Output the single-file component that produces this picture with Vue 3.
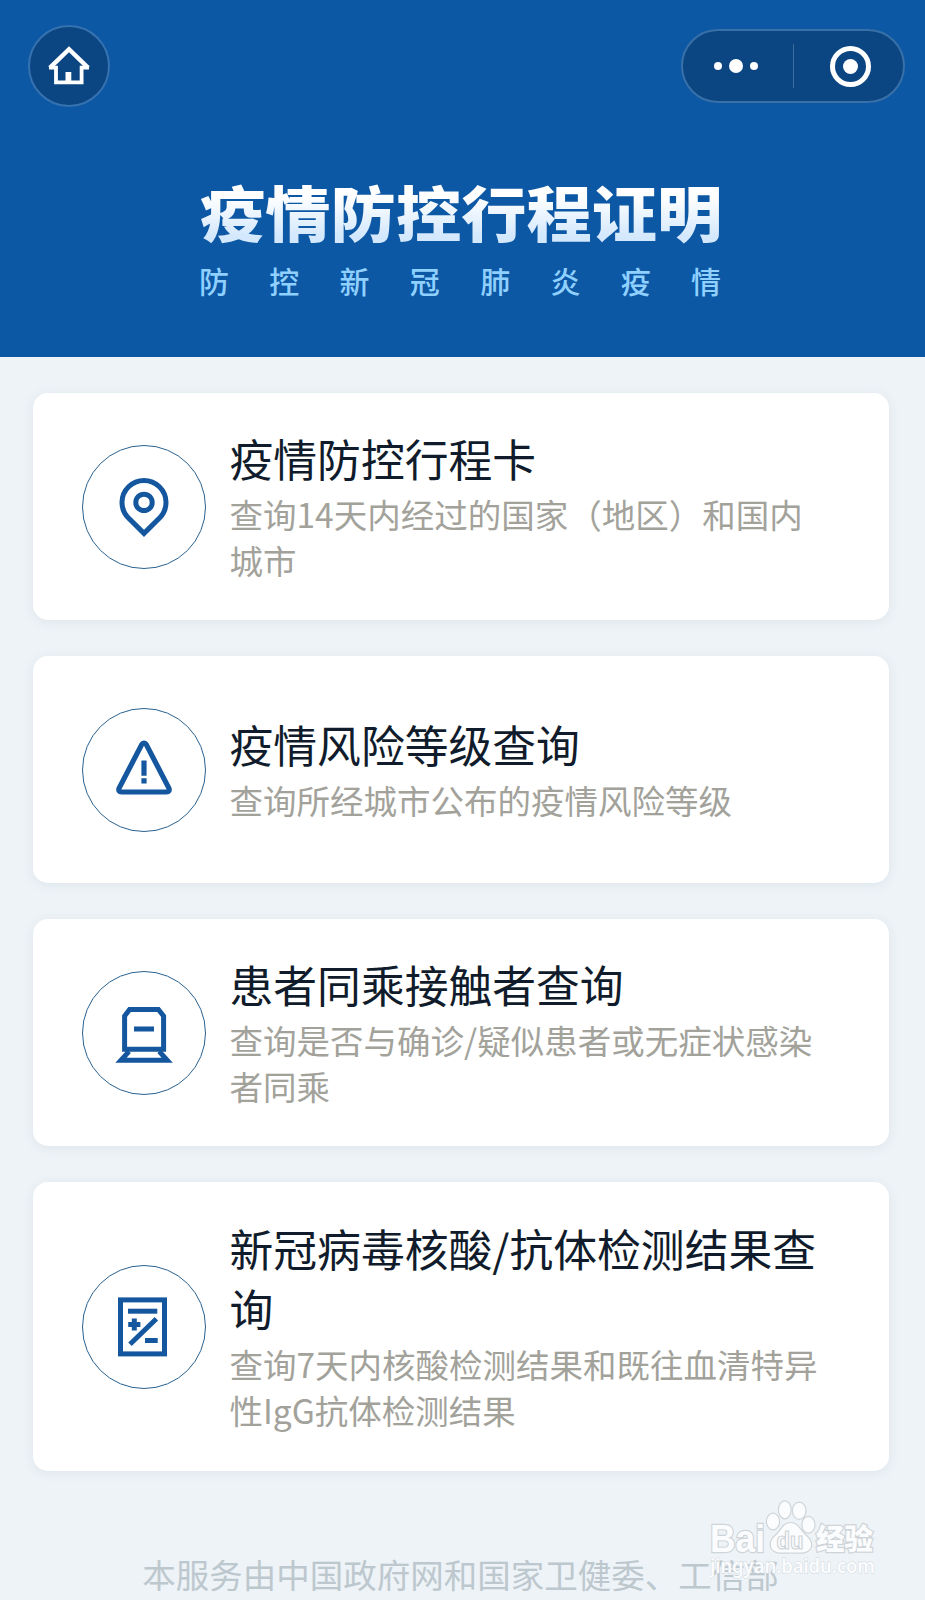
<template>
  <div class="page">
    <header class="hero">
      <div class="nav">
        <button class="home" aria-label="首页">
          <svg width="44" height="42" viewBox="0 0 44 42" fill="none" stroke="#fff">
            <path d="M2.8 22.8 L22 4.2 L41.2 22.8" stroke-width="4.4" />
            <path d="M2 22.7H9V37.3H34.6V22.7H42" stroke-width="3.8" />
            <path d="M21.4 37.3V27" stroke-width="5.8" />
          </svg>
        </button>
        <div class="capsule">
          <button class="capsule-btn more" aria-label="更多">
            <i class="dot"></i>
            <i class="dot big"></i>
            <i class="dot"></i>
          </button>
          <i class="divider"></i>
          <button class="capsule-btn" aria-label="关闭">
            <i class="ring"><i class="ring-core"></i></i>
          </button>
        </div>
      </div>
      <h1 class="hero-title">疫情防控行程证明</h1>
      <p class="hero-sub">
        <span v-for="char in subtitle" :key="char">{{ char }}</span>
      </p>
    </header>

    <main class="list">
      <section v-for="item in items" :key="item.icon" class="card" :class="item.icon">
        <div class="icon">
          <svg width="64" height="64" viewBox="0 0 64 64" fill="none" stroke="#14579f" stroke-width="5">
            <template v-if="item.icon === 'pin'">
              <path d="M32 58.4 L16 42.6 A22 22 0 1 1 48 42.6 Z" />
              <circle cx="32" cy="27.4" r="8.2" />
            </template>
            <template v-else-if="item.icon === 'risk'">
              <path d="M29.8 6.4 Q32 3.8 34.2 6.4 L57 50.4 Q58 53.8 54.4 54 H9.6 Q6 53.8 7 50.4 Z" stroke-width="5.2" stroke-linejoin="round" />
              <path d="M32 22.6V37.8M32 40.2V45.4" stroke-width="5.2" />
            </template>
            <template v-else-if="item.icon === 'train'">
              <path d="M17.6 8.4H46.4L51.6 15V48.2H12.6V15Z" />
              <path d="M22 28H42" />
              <path d="M17 50.4L9 59.2H55.2L47.2 50.4" />
            </template>
            <template v-else>
              <rect x="8.5" y="4.9" width="44" height="54" />
              <path d="M16 16.2H45.3" />
              <path d="M16.2 29.5H28.4M22.3 23.4V35.6" />
              <path d="M18 49.2L44.4 23.8" />
              <path d="M33 45.5H45.7" />
            </template>
          </svg>
        </div>
        <div class="content">
          <h2 class="title">{{ item.title }}</h2>
          <p class="desc">{{ item.desc }}</p>
        </div>
      </section>
    </main>

    <footer class="footer">本服务由中国政府网和国家卫健委、工信部</footer>

    <svg class="watermark" width="170" height="84" viewBox="0 0 170 84">
      <g class="mark">
        <ellipse cx="63" cy="25.5" rx="6.6" ry="8.4" />
        <ellipse cx="74.8" cy="13.8" rx="6.4" ry="9" />
        <ellipse cx="89.2" cy="14.8" rx="6.8" ry="8.6" />
        <ellipse cx="98.4" cy="28.8" rx="6.6" ry="8.4" />
        <path d="M80.5 26.5C88 26.5 90 33 95 38C101 43 103.5 48 100.5 53C97 58.5 89 57 80.5 57C72 57 65 58.5 61.5 53C58.5 48 61 42 66.5 38C71.5 33 73 26.5 80.5 26.5Z" />
        <text class="latin" x="0" y="56" textLength="55" lengthAdjust="spacingAndGlyphs">Bai</text>
        <text class="du" x="66.5" y="53" textLength="27" lengthAdjust="spacingAndGlyphs">du</text>
        <text class="cjk" x="106" y="54" textLength="57" lengthAdjust="spacingAndGlyphs">经验</text>
      </g>
      <text class="url" x="0" y="77" textLength="165" lengthAdjust="spacingAndGlyphs">jingyan.baidu.com</text>
    </svg>
  </div>
</template>

<script setup>
const subtitle = '防控新冠肺炎疫情'

const items = [
  {
    icon: 'pin',
    title: '疫情防控行程卡',
    desc: '查询14天内经过的国家（地区）和国内城市',
  },
  {
    icon: 'risk',
    title: '疫情风险等级查询',
    desc: '查询所经城市公布的疫情风险等级',
  },
  {
    icon: 'train',
    title: '患者同乘接触者查询',
    desc: '查询是否与确诊/疑似患者或无症状感染者同乘',
  },
  {
    icon: 'report',
    title: '新冠病毒核酸/抗体检测结果查询',
    desc: '查询7天内核酸检测结果和既往血清特异性IgG抗体检测结果',
  },
]
</script>

<style>
body {
  background: #edf3f7;
}
</style>

<style scoped>
.page {
  position: relative;
  box-sizing: border-box;
  height: 1600px;
  overflow: hidden;
  background: #edf3f7;
  font-family: 'Noto Sans CJK SC', sans-serif;
}

h1,
h2,
p {
  margin: 0;
}

button {
  padding: 0;
  border: 0;
  background: none;
}

.hero {
  box-sizing: border-box;
  height: 357px;
  padding-top: 25px;
  background: #0d58a4;
}

.nav {
  display: flex;
  align-items: center;
  justify-content: space-between;
  height: 82px;
  padding: 0 20px 0 28px;
}

.home {
  display: flex;
  align-items: center;
  justify-content: center;
  box-sizing: border-box;
  width: 82px;
  height: 82px;
  border: 2px solid #3672b0;
  border-radius: 50%;
  background: #0b4682;
}

.capsule {
  display: flex;
  align-items: center;
  box-sizing: border-box;
  width: 224px;
  height: 74px;
  border: 2px solid #3970a8;
  border-radius: 37px;
  background: #0b4682;
}

.capsule-btn {
  display: flex;
  flex: 1;
  align-items: center;
  justify-content: center;
}

.more {
  gap: 7px;
}

.dot {
  width: 8px;
  height: 8px;
  border-radius: 50%;
  background: #fff;
}

.dot:last-child {
  margin-right: 3px;
}

.dot.big {
  width: 14px;
  height: 14px;
}

.divider {
  width: 1px;
  height: 44px;
  background: #3d6c9d;
}

.ring {
  display: flex;
  align-items: center;
  justify-content: center;
  box-sizing: border-box;
  width: 41px;
  height: 41px;
  margin-left: 5px;
  border: 5.5px solid #fff;
  border-radius: 50%;
}

.ring-core {
  width: 15px;
  height: 15px;
  border-radius: 50%;
  background: #fff;
}

.hero-title {
  width: 524px;
  margin: 64px 0 0 200px;
  background: linear-gradient(#fff 30%, #d3e8fd 85%);
  background-clip: text;
  color: transparent;
  font-size: 65.3px;
  font-weight: 900;
  line-height: 80px;
  white-space: nowrap;
  transform: scaleY(0.93);
}

.hero-sub {
  display: flex;
  justify-content: space-between;
  width: 522px;
  margin: 9px 0 0 199px;
  color: #8fd0ff;
  font-size: 30px;
  font-weight: 500;
  line-height: 40px;
}

.list {
  display: flex;
  flex-direction: column;
  gap: 36px;
  padding: 36px 36px 0 33px;
}

.card {
  display: flex;
  align-items: center;
  box-sizing: border-box;
  height: 227px;
  padding: 0 64px 0 49px;
  border-radius: 15px;
  background: #fff;
  box-shadow: 0 2px 12px rgba(60, 80, 90, 0.08);
}

.card.report {
  height: 289px;
}

.icon {
  display: flex;
  flex: none;
  align-items: center;
  justify-content: center;
  box-sizing: border-box;
  width: 124px;
  height: 124px;
  border: 1.5px solid #2a628f;
  border-radius: 50%;
}

.content {
  flex: 1;
  margin: -1px 0 0 23.5px;
}

.title {
  margin-bottom: 2.5px;
  color: #101c2b;
  font-size: 43.8px;
  font-weight: 400;
  line-height: 59.5px;
}

.desc {
  color: #a2a29b;
  font-size: 33.5px;
  font-weight: 400;
  line-height: 46px;
}

.footer {
  margin: 80px 4px 0 0;
  color: #bdc8ce;
  font-size: 33.5px;
  line-height: 46px;
  text-align: center;
}

/* sits over the footer line */
.watermark {
  position: absolute;
  right: 45px;
  bottom: 20px;
}

.mark {
  fill: #fbfcfe;
  stroke: #cfd4d8;
  stroke-width: 1.2px;
}

.latin {
  stroke-width: 2.4px;
  paint-order: stroke;
  font: bold 38px 'Liberation Sans', sans-serif;
}

.du {
  font: bold 24px 'Liberation Sans', sans-serif;
}

.cjk {
  stroke-width: 2.4px;
  paint-order: stroke;
  font: 900 29px 'Noto Sans CJK SC', sans-serif;
}

.url {
  fill: #fbfcfe;
  stroke: #d3d8dc;
  stroke-width: 1px;
  paint-order: stroke;
  font: 600 20px 'Noto Sans', sans-serif;
}
</style>
